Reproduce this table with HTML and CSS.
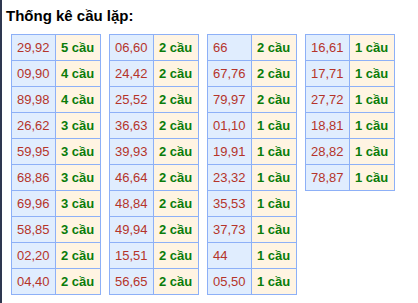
FILE: index.html
```html
<!DOCTYPE html>
<html>
<head>
<meta charset="utf-8">
<link rel="stylesheet" href="styles.css">
</head>
<body>
<div class="page">
  <div class="title">Thống kê cầu lặp:</div>
  <div class="tables">
    <table class="stat">
      <tr><td class="num">29,92</td><td class="cnt">5 cầu</td></tr>
      <tr><td class="num">09,90</td><td class="cnt">4 cầu</td></tr>
      <tr><td class="num">89,98</td><td class="cnt">4 cầu</td></tr>
      <tr><td class="num">26,62</td><td class="cnt">3 cầu</td></tr>
      <tr><td class="num">59,95</td><td class="cnt">3 cầu</td></tr>
      <tr><td class="num">68,86</td><td class="cnt">3 cầu</td></tr>
      <tr><td class="num">69,96</td><td class="cnt">3 cầu</td></tr>
      <tr><td class="num">58,85</td><td class="cnt">3 cầu</td></tr>
      <tr><td class="num">02,20</td><td class="cnt">2 cầu</td></tr>
      <tr><td class="num">04,40</td><td class="cnt">2 cầu</td></tr>
    </table>
    <table class="stat">
      <tr><td class="num">06,60</td><td class="cnt">2 cầu</td></tr>
      <tr><td class="num">24,42</td><td class="cnt">2 cầu</td></tr>
      <tr><td class="num">25,52</td><td class="cnt">2 cầu</td></tr>
      <tr><td class="num">36,63</td><td class="cnt">2 cầu</td></tr>
      <tr><td class="num">39,93</td><td class="cnt">2 cầu</td></tr>
      <tr><td class="num">46,64</td><td class="cnt">2 cầu</td></tr>
      <tr><td class="num">48,84</td><td class="cnt">2 cầu</td></tr>
      <tr><td class="num">49,94</td><td class="cnt">2 cầu</td></tr>
      <tr><td class="num">15,51</td><td class="cnt">2 cầu</td></tr>
      <tr><td class="num">56,65</td><td class="cnt">2 cầu</td></tr>
    </table>
    <table class="stat">
      <tr><td class="num">66</td><td class="cnt">2 cầu</td></tr>
      <tr><td class="num">67,76</td><td class="cnt">2 cầu</td></tr>
      <tr><td class="num">79,97</td><td class="cnt">2 cầu</td></tr>
      <tr><td class="num">01,10</td><td class="cnt">1 cầu</td></tr>
      <tr><td class="num">19,91</td><td class="cnt">1 cầu</td></tr>
      <tr><td class="num">23,32</td><td class="cnt">1 cầu</td></tr>
      <tr><td class="num">35,53</td><td class="cnt">1 cầu</td></tr>
      <tr><td class="num">37,73</td><td class="cnt">1 cầu</td></tr>
      <tr><td class="num">44</td><td class="cnt">1 cầu</td></tr>
      <tr><td class="num">05,50</td><td class="cnt">1 cầu</td></tr>
    </table>
    <table class="stat">
      <tr><td class="num">16,61</td><td class="cnt">1 cầu</td></tr>
      <tr><td class="num">17,71</td><td class="cnt">1 cầu</td></tr>
      <tr><td class="num">27,72</td><td class="cnt">1 cầu</td></tr>
      <tr><td class="num">18,81</td><td class="cnt">1 cầu</td></tr>
      <tr><td class="num">28,82</td><td class="cnt">1 cầu</td></tr>
      <tr><td class="num">78,87</td><td class="cnt">1 cầu</td></tr>
    </table>
  </div>
</div>
</body>
</html>
```

FILE: styles.css
```css
html, body {
  margin: 0;
  padding: 0;
  background: #ffffff;
}
.page {
  border-left: 2px solid #2e3750;
  min-height: 303px;
  box-sizing: border-box;
  padding: 7px 0 0 4px;
  font-family: "Liberation Sans", Arial, sans-serif;
}
.title {
  font-size: 15px;
  font-weight: bold;
  line-height: 17px;
  color: #000000;
}
.tables {
  display: flex;
  align-items: flex-start;
  gap: 8px;
  margin-top: 10px;
  padding-left: 5px;
}
.stat {
  border-collapse: collapse;
  font-size: 13px;
  line-height: 15px;
}
.stat td {
  border: 1px solid #8db0f7;
  padding: 5px 5px;
  text-align: left;
  white-space: nowrap;
  box-sizing: content-box;
}
.num {
  width: 33px;
  background: #e0edfe;
  color: #b5342a;
}
.cnt {
  width: 34px;
  background: #fff4e2;
  color: #0a7c0a;
  font-weight: bold;
}
```
